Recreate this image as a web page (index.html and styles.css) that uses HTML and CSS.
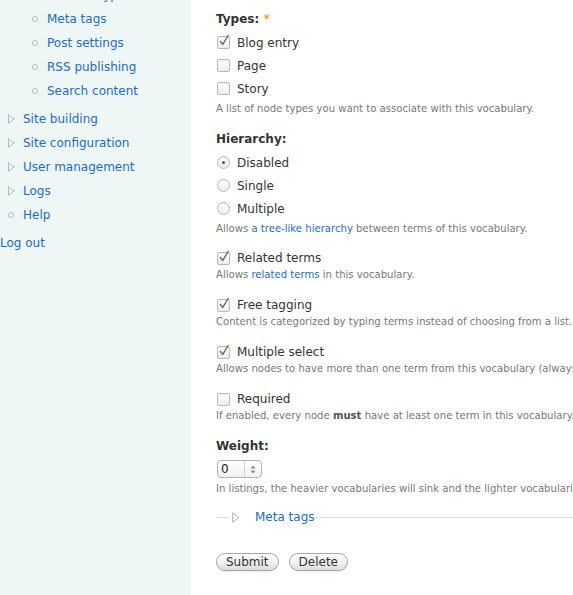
FILE: index.html
```html
<!DOCTYPE html>
<html>
<head>
<meta charset="utf-8">
<link rel="stylesheet" href="styles.css">
</head>
<body>
<div class="page">
  <aside class="sidebar">
    <ul class="menu">
      <li class="sub"><span class="bullet"></span><a href="#">Content types</a></li>
      <li class="sub"><span class="bullet"></span><a href="#">Meta tags</a></li>
      <li class="sub"><span class="bullet"></span><a href="#">Post settings</a></li>
      <li class="sub"><span class="bullet"></span><a href="#">RSS publishing</a></li>
      <li class="sub last"><span class="bullet"></span><a href="#">Search content</a></li>
      <li class="top"><svg class="tri" width="7" height="10" viewBox="0 0 7 10"><path d="M0.5 0.8 L6.2 5 L0.5 9.2 Z" fill="none" stroke="#b4b8ba" stroke-width="1"/></svg><a href="#">Site building</a></li>
      <li class="top"><svg class="tri" width="7" height="10" viewBox="0 0 7 10"><path d="M0.5 0.8 L6.2 5 L0.5 9.2 Z" fill="none" stroke="#b4b8ba" stroke-width="1"/></svg><a href="#">Site configuration</a></li>
      <li class="top"><svg class="tri" width="7" height="10" viewBox="0 0 7 10"><path d="M0.5 0.8 L6.2 5 L0.5 9.2 Z" fill="none" stroke="#b4b8ba" stroke-width="1"/></svg><a href="#">User management</a></li>
      <li class="top"><svg class="tri" width="7" height="10" viewBox="0 0 7 10"><path d="M0.5 0.8 L6.2 5 L0.5 9.2 Z" fill="none" stroke="#b4b8ba" stroke-width="1"/></svg><a href="#">Logs</a></li>
      <li class="top"><span class="bullet top-bullet"></span><a href="#">Help</a></li>
      <li class="logout"><a href="#">Log out</a></li>
    </ul>
  </aside>

  <main class="content">
    <div class="heading">Types: <span class="req">*</span></div>
    <div class="option"><span class="cb checked"><svg width="12" height="13" viewBox="0 0 12 13"><path d="M2 7 L4.8 10.4 L10.5 1" fill="none" stroke="#666" stroke-width="1.4"/></svg></span>Blog entry</div>
    <div class="option"><span class="cb"></span>Page</div>
    <div class="option"><span class="cb"></span>Story</div>
    <div class="desc">A list of node types you want to associate with this vocabulary.</div>

    <div class="heading gap">Hierarchy:</div>
    <div class="option"><span class="rb on"></span>Disabled</div>
    <div class="option"><span class="rb"></span>Single</div>
    <div class="option"><span class="rb"></span>Multiple</div>
    <div class="desc">Allows <a href="#">a tree-like hierarchy</a> between terms of this vocabulary.</div>

    <div class="single first"><span class="cb checked"><svg width="12" height="13" viewBox="0 0 12 13"><path d="M2 7 L4.8 10.4 L10.5 1" fill="none" stroke="#666" stroke-width="1.4"/></svg></span>Related terms</div>
    <div class="desc tight">Allows <a href="#">related terms</a> in this vocabulary.</div>

    <div class="single"><span class="cb checked"><svg width="12" height="13" viewBox="0 0 12 13"><path d="M2 7 L4.8 10.4 L10.5 1" fill="none" stroke="#666" stroke-width="1.4"/></svg></span>Free tagging</div>
    <div class="desc tight">Content is categorized by typing terms instead of choosing from a list.</div>

    <div class="single"><span class="cb checked"><svg width="12" height="13" viewBox="0 0 12 13"><path d="M2 7 L4.8 10.4 L10.5 1" fill="none" stroke="#666" stroke-width="1.4"/></svg></span>Multiple select</div>
    <div class="desc tight">Allows nodes to have more than one term from this vocabulary (always true for free tagging).</div>

    <div class="single"><span class="cb"></span>Required</div>
    <div class="desc tight">If enabled, every node <strong>must</strong> have at least one term in this vocabulary.</div>

    <div class="heading gap">Weight:</div>
    <div class="select"><span class="sel-val">0</span><span class="sel-arrows"><svg width="6" height="9" viewBox="0 0 6 9"><path d="M3 0.5 L5.5 3.5 L0.5 3.5 Z M3 8.5 L5.5 5.5 L0.5 5.5 Z" fill="#8a8a8a"/></svg></span></div>
    <div class="desc weight-desc">In listings, the heavier vocabularies will sink and the lighter vocabularies will be positioned nearer the top.</div>

    <div class="fieldset">
      <span class="fs-line short"></span>
      <svg class="fs-tri" width="8" height="11" viewBox="0 0 8 11"><path d="M0.6 0.8 L7 5.5 L0.6 10.2 Z" fill="none" stroke="#b4b8ba" stroke-width="1"/></svg>
      <a href="#" class="fs-legend">Meta tags</a>
      <span class="fs-line long"></span>
    </div>

    <div class="actions">
      <button class="btn">Submit</button>
      <button class="btn">Delete</button>
    </div>
  </main>
</div>
</body>
</html>
```

FILE: styles.css
```css
html, body {
  margin: 0;
  padding: 0;
  overflow: hidden;
  background: #ffffff;
}

body {
  font-family: "DejaVu Sans", Verdana, sans-serif;
  font-size: 12px;
  color: #333333;
}

a {
  color: #1d6cc1;
  text-decoration: none;
}

.page {
  display: flex;
  min-height: 100vh;
}

/* Sidebar */
.sidebar {
  width: 191px;
  flex: 0 0 191px;
  background: #eef6f6;
  min-height: 100vh;
}

.menu {
  list-style: none;
  margin: -17px 0 0 0;
  padding: 0;
}

.menu li {
  display: flex;
  align-items: center;
  height: 24px;
  white-space: nowrap;
}

.menu li.sub {
  padding-left: 32px;
}

.menu li.sub.last {
  margin-bottom: 4px;
}

.menu li.top {
  padding-left: 8px;
}

.menu li.logout {
  margin-top: 4px;
  padding-left: 0;
}

.bullet {
  width: 4px;
  height: 4px;
  border: 1px solid #b6babc;
  border-radius: 50%;
  margin-right: 9px;
  flex: 0 0 auto;
}

.top-bullet {
  margin-right: 9px;
}

.tri {
  margin-right: 8px;
  flex: 0 0 auto;
}

/* Main content */
.content {
  flex: 1 1 auto;
  min-width: 0;
  overflow: hidden;
  padding: 7px 0 0 25px;
}

.heading {
  font-weight: bold;
  line-height: 24px;
  height: 24px;
  color: #333;
}

.heading.gap {
  margin-top: 11px;
}

.req {
  color: #f5a623;
  font-weight: bold;
}

.option, .single {
  display: flex;
  align-items: center;
  white-space: nowrap;
  color: #333;
}

.option {
  height: 23px;
}

.single {
  height: 20px;
  margin-top: 13px;
}

.single.first {
  margin-top: 12px;
}

.cb, .rb {
  position: relative;
  width: 11px;
  height: 11px;
  border: 1px solid #b9b9b9;
  background: linear-gradient(#ffffff, #ececec);
  margin: 0 7px 0 1px;
  flex: 0 0 auto;
  display: flex;
  align-items: center;
  justify-content: center;
  box-shadow: inset 0 1px 1px rgba(0,0,0,0.06);
}

.cb {
  border-radius: 2px;
}

.cb svg {
  position: absolute;
  left: 0;
  top: -3px;
}

.rb {
  border-radius: 50%;
}

.rb.on::after {
  content: "";
  width: 3px;
  height: 3px;
  border-radius: 50%;
  background: #555;
}

.desc {
  font-size: 10.1px;
  line-height: 14px;
  height: 14px;
  margin-top: 2px;
  color: #777777;
  white-space: nowrap;
}

.desc.tight {
  margin-top: 0;
}

.desc strong {
  color: #555;
}

/* Weight select */
.select {
  margin-top: 2px;
  margin-left: 1px;
  width: 43px;
  height: 16px;
  border: 1px solid #b3b3b3;
  border-radius: 4px;
  background: linear-gradient(#ffffff, #f1f1f1);
  display: flex;
  align-items: center;
}

.sel-val {
  flex: 1 1 auto;
  padding-left: 3px;
  color: #222;
  font-size: 12px;
  line-height: 16px;
}

.sel-arrows {
  width: 16px;
  height: 16px;
  border-left: 1px solid #d4d4d4;
  display: flex;
  align-items: center;
  justify-content: center;
}

.weight-desc {
  margin-top: 4px;
}

/* Fieldset */
.fieldset {
  margin-top: 11px;
  height: 20px;
  display: flex;
  align-items: center;
  white-space: nowrap;
}

.fs-line {
  height: 1px;
  background: #d9dee4;
}

.fs-line.short {
  width: 13px;
  flex: 0 0 13px;
  margin-right: 3px;
}

.fs-line.long {
  flex: 1 1 auto;
  min-width: 300px;
}

.fs-tri {
  margin-right: 15px;
  flex: 0 0 auto;
}

.fs-legend {
  font-size: 12px;
}

/* Buttons */
.actions {
  margin-top: 26px;
  display: flex;
  gap: 10px;
}

.btn {
  font-family: "DejaVu Sans", Verdana, sans-serif;
  font-size: 12px;
  color: #333;
  height: 18px;
  line-height: 16px;
  padding: 0 9px;
  border: 1px solid #a9a9a9;
  border-radius: 9px;
  background: linear-gradient(#ffffff 0%, #f2f2f2 50%, #dcdcdc 100%);
  box-shadow: 0 1px 1px rgba(0,0,0,0.08);
  margin: 0;
}
```
